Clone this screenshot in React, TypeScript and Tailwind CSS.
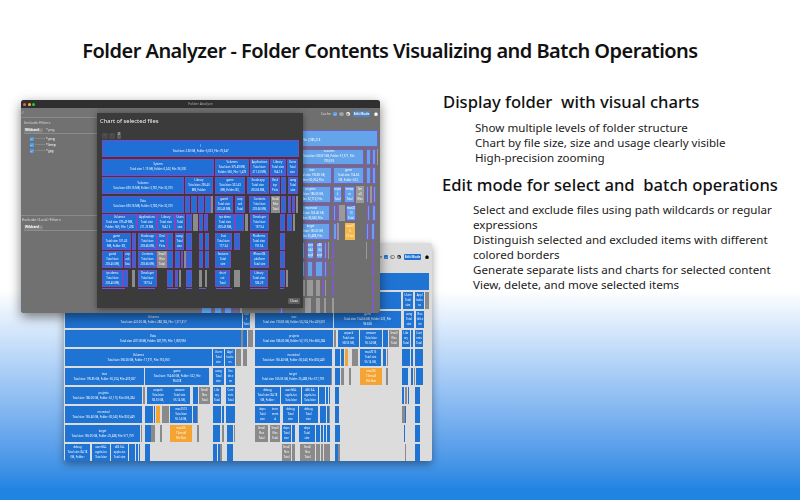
import React from 'react';
import { Home, Settings, RotateCcw, Check, ChevronDown } from 'lucide-react';

type Kind = 'b' | 'g' | 'o';
type CellData = [number, number, Kind, ...string[]];

const themes = {
  light: {
    b: 'bg-[#1f73d3] text-white',
    g: 'bg-[#8a8a8a] text-white',
    o: 'bg-[#f4a432] text-white',
  },
  dim: {
    b: 'bg-[#63a4ea] text-white border border-[#7f5cc4]',
    g: 'bg-[#9a9a9a] text-white',
    o: 'bg-[#f7b84a] text-white',
  },
  modal: {
    b: 'bg-[#1f6fd6] text-white border border-[#7f48c0]',
    g: 'bg-[#8c8c8c] text-white',
    o: 'bg-[#f4a432] text-white',
  },
};

function Row({ cells, origin, theme, height }: { cells: CellData[]; origin: number; theme: keyof typeof themes; height: string }) {
  let cursor = origin;
  return (
    <div className={`flex shrink-0 ${height}`}>
      {cells.map(([x1, x2, kind, ...lines], i) => {
        const style = { marginLeft: x1 - cursor, width: x2 - x1 };
        cursor = x2;
        return (
          <div key={i} style={style} className={`shrink-0 flex flex-col items-center justify-center overflow-hidden text-center text-[2.7px] leading-[5px] ${themes[theme][kind]}`}>
            {lines.map((l, j) => (
              <span key={j} className="whitespace-nowrap">{l}</span>
            ))}
          </div>
        );
      })}
    </div>
  );
}

const backRows: CellData[][] = [
  [[65, 429, 'b']],
  [[65, 401, 'b'], [403, 413, 'b', 'Users', 'Total', 'size'], [415, 424, 'b', 'Appl', 'icatio', 'ns'], [425, 429, 'g']],
  [
    [65, 242, 'b', 'Volumes', 'Total size: 422.00 GB, Folder: 288,184, File: 1,371,817'], [243, 250, 'b', 'Libr', 'r', 'Total'],
    [255, 333, 'b', 'mac', 'Total size: 190.85 GB, Folder: 50,204, File: 439,007'], [334, 401, 'b', 'game', 'Total size: 154.66 GB, Folder: 322, File', '96.638'],
    [404, 414, 'b', 'uang', 'Total', 'size'], [416, 424, 'b', 'Roo', 'tkit.e', 'en'],
  ],
  [
    [65, 241, 'b', 'Data', 'Total size: 419.18 GB, Folder: 287,975, File: 1,369,956'], [241, 243, 'g'], [243, 247, 'b'], [248, 253, 'g'],
    [255, 333, 'b', 'projects', 'Total size: 186.00 GB, Folder: 52,110, File: 606,284'], [334, 336, 'g'], [338, 359, 'b', 'unpack', 'Total size', '58.53 GB,'],
    [360, 382, 'b', 'vmware', 'Total size', '55.14 GB,'], [383, 388, 'b'], [389, 399, 'g', 'Small', 'files', 'Total'], [402, 410, 'b', 'Libr', 'ary', 'Total'], [411, 413, 'b'], [415, 423, 'b', 'Cont', 'ents', 'Total'],
  ],
  [
    [65, 212, 'b', 'Volumes', 'Total size: 350.00 GB, Folder: 17,971, File: 750,053'], [213, 224, 'b', 'Users', 'Total', 'size'], [225, 235, 'b', 'Appl', 'icatio', 'ns'], [236, 241, 'g'], [243, 247, 'g'],
    [255, 332, 'b', 'moreviral', 'Total size: 165.40 GB, Folder: 30,040, File: 830,449'], [335, 340, 'b'], [341, 344, 'b'], [345, 348, 'o'], [352, 358, 'g'],
    [360, 381, 'b', 'mac2013', 'Total size', '55.14 GB,'], [383, 386, 'b'], [387, 388, 'g'], [402, 410, 'b'], [411, 413, 'b'], [415, 423, 'b'],
  ],
  [
    [65, 144, 'b', 'mac', 'Total size: 190.85 GB, Folder: 50,204, File: 439,007'], [145, 209, 'b', 'game', 'Total size: 154.66 GB, Folder: 322, File', '96.638'], [213, 224, 'b', 'uang', 'Total', 'size'], [226, 235, 'b', 'Xco', 'de.e', 'en'],
    [255, 331, 'b', 'target', 'Total size: 165.05 GB, Folder: 25,488, File: 571,759'], [331, 332, 'g'], [335, 340, 'b'], [341, 344, 'g'], [349, 351, 'g'],
    [360, 382, 'o', 'macOS', '13 mod!', 'File Size'], [386, 388, 'g'], [402, 408, 'b'], [411, 413, 'b'], [414, 415, 'g'], [416, 423, 'b'],
  ],
  [
    [65, 142, 'b', 'projects', 'Total size: 186.00 GB, Folder: 52,110, File: 606,284'], [143, 145, 'g'], [147, 169, 'b', 'unpack', 'Total size', '58.53 GB,'], [169, 190, 'b', 'vmware', 'Total size', '55.14 GB,'], [193, 198, 'b'],
    [199, 210, 'g', 'Small', 'files', 'Total'], [213, 221, 'b', 'Libr', 'ary', 'Total'], [226, 235, 'b', 'Cont', 'ents', 'Total'],
    [255, 280, 'b', 'debug', 'Total size: 84.18', 'GB, Folder:'], [281, 301, 'b', 'aarch64-', 'apple-ios', 'Total size'], [302, 318, 'b', 'x86_64-', 'apple-ios', 'Total size'], [319, 325, 'b'], [326, 328, 'b'], [329, 330, 'b'],
    [335, 339, 'b'], [402, 404, 'b'], [405, 407, 'g'], [408, 409, 'b'], [415, 420, 'b'],
  ],
  [
    [65, 142, 'b', 'moreviral', 'Total size: 165.40 GB, Folder: 30,040, File: 830,449'], [145, 153, 'b'], [154, 155, 'b'], [156, 160, 'o'], [162, 169, 'g'], [170, 192, 'b', 'mac2013', 'Total size', '55.14 GB,'], [193, 197, 'b'], [197, 198, 'g'],
    [213, 221, 'b'], [222, 224, 'b'], [226, 235, 'b'],
    [255, 270, 'b', 'deps', 'Total', 'size'], [270, 280, 'b', 'incre', 'ment', 'al'], [283, 298, 'b', 'debug', 'Total', 'size'], [299, 318, 'b', 'debug', 'Total', 'size'], [320, 326, 'b'], [327, 329, 'b'], [329, 330, 'g'],
    [335, 339, 'b'], [402, 405, 'g'], [405, 406, 'b'], [415, 420, 'b'],
  ],
  [
    [65, 140, 'b', 'target', 'Total size: 165.05 GB, Folder: 25,488, File: 571,759'], [141, 142, 'g'], [145, 151, 'b'], [151, 155, 'g'], [160, 162, 'g'], [170, 192, 'o', 'macOS', '13 mod!', 'File Size'], [197, 199, 'g'],
    [213, 220, 'b'], [222, 224, 'g'], [227, 233, 'b'], [234, 235, 'g'],
    [255, 268, 'g', 'Small', 'files', 'Total'], [270, 280, 'g', 'Small', 'files', 'Total'], [282, 291, 'b', 'deps', 'Total', 'size'], [292, 295, 'b'], [299, 315, 'b', 'deps', 'Total', 'size'], [316, 320, 'b'], [321, 323, 'b'], [324, 326, 'b'], [327, 330, 'b'],
    [335, 340, 'b'], [404, 405, 'b'], [415, 420, 'b'],
  ],
  [
    [65, 90, 'b', 'debug', 'Total size: 84.18', 'GB, Folder:'], [92, 110, 'b', 'aarch64-', 'apple-ios', 'Total size'], [111, 128, 'b', 'x86_64-', 'apple-ios', 'Total size'], [129, 135, 'b'], [136, 138, 'b'], [139, 140, 'b'],
    [145, 150, 'b'], [213, 217, 'b'], [218, 220, 'b'], [220, 222, 'g'], [227, 233, 'b'],
    [282, 291, 'g', 'Small', 'files', 'Total'], [292, 295, 'g'], [300, 315, 'g', 'Small', 'files', 'Total'], [316, 320, 'g'], [321, 323, 'g'], [324, 327, 'g'], [327, 330, 'g'],
    [335, 338, 'b'], [338, 340, 'g'], [405, 406, 'g'], [415, 420, 'b'],
  ],
];

// the left part of these rows sits behind the chart sheet
const frontRows: CellData[][] = [
  [[200, 378, 'b', '/', 'Total size: 1.20 TB, Folder: 420,113, File: 2,985,218']],
  [[294, 364, 'b', 'Volumes', 'Total size: 500.81 GB, Folder: 57,571, File:', '790,053'], [366, 371, 'b'], [372, 376, 'b'], [377, 378, 'g']],
  [[292, 332, 'b', 'mac', 'Total size: 190.85 GB,', 'Folder: 50,204, File:'], [333, 364, 'b', 'game', 'Total size: 154.66', 'GB, Folder: 322,'], [366, 371, 'b'], [372, 376, 'b']],
  [[290, 331, 'b', 'projects', 'Total size: 186.00 GB,', 'Folder: 52,110, File:'], [333, 342, 'b', 'unpac', 'k', 'Total'], [344, 355, 'b', 'vmwa', 're', 'Total'], [356, 364, 'g', 'Sm', 'all', 'files'], [366, 369, 'b'], [370, 372, 'g'], [373, 376, 'b']],
  [[292, 330, 'b', 'moreviral', 'Total size: 165.40 GB,', 'Folder: 30,040, File:'], [333, 336, 'b'], [337, 338, 'b'], [338, 344, 'g'], [345, 355, 'b', 'mac20', '13', 'Total'], [366, 369, 'b'], [371, 375, 'b']],
  [[291, 330, 'b', 'target', 'Total size: 165.05 GB,', 'Folder: 25,488, File:'], [333, 337, 'b'], [337, 339, 'g'], [345, 355, 'o', 'macO', 'S', '13 mo'], [366, 369, 'b'], [371, 375, 'b']],
  [[290, 305, 'b'], [307, 314, 'b', 'aarc', 'h64', 'appl'], [316, 323, 'b', 'x86', '_64', 'appl'], [324, 327, 'b'], [328, 329, 'g'], [332, 334, 'b'], [366, 367, 'g'], [372, 373, 'b']],
  [[290, 305, 'b'], [307, 313, 'b'], [315, 323, 'b'], [324, 327, 'b'], [332, 334, 'b'], [372, 374, 'b']],
  [[290, 305, 'g'], [307, 313, 'g'], [316, 320, 'g'], [322, 324, 'b'], [325, 326, 'g'], [332, 334, 'b'], [372, 374, 'b']],
  [
    [201, 212, 'b'], [214, 222, 'b'], [224, 232, 'b'], [235, 237, 'b'], [240, 242, 'g'], [280, 283, 'b'],
    [305, 311, 'g'], [316, 320, 'g'], [324, 326, 'g'], [332, 334, 'g'], [372, 374, 'b'],
  ],
];

const modalRows: CellData[][] = [
  [[102, 299, 'b', '/', 'Total size: 2.30 GB, Folder: 5,023, File: 70,647']],
  [[102, 214, 'b', 'System', 'Total size: 1.19 GB, Folder: 6,243, File: 36,330'], [215, 249, 'b', 'Volumes', 'Total size: 375.49 MB,', 'Folder: 565, File: 1,478'], [250, 269, 'b', 'Applications', 'Total size:', '211.23 MB,'], [270, 286, 'b', 'Library', 'Total size:', '164.15'], [287, 298, 'b', 'Users', 'Total', 'size']],
  [[102, 184, 'b', 'Volumes', 'Total size: 693.16 MB, Folder: 3,781, File: 32,375'], [185, 213, 'b', 'Library', 'Total size: 290.40', 'MB, Folder:'], [215, 245, 'b', 'game', 'Total size: 322.43', 'MB, Folder: 83,'], [247, 269, 'b', 'Xcode.app', 'Total size:', '203.66 MB,'], [270, 280, 'b', 'Desk', 'top', 'Picts'], [281, 286, 'b'], [288, 298, 'b', 'uang', 'Total', 'size']],
  [[102, 184, 'b', 'Data', 'Total size: 693.16 MB, Folder: 3,780, File: 32,375'], [185, 190, 'b'], [191, 197, 'b'], [198, 204, 'b'], [205, 211, 'b'], [211, 213, 'g'], [215, 233, 'b', 'gamd', 'Total size:', '203.45 MB,'], [235, 245, 'b', 'unp', 'ack', 'Total'], [249, 270, 'b', 'Contents', 'Total size:', '203.66 MB,'], [271, 280, 'g', 'Small', 'Files', 'Total'], [281, 286, 'b'], [288, 291, 'b'], [292, 295, 'b'], [296, 298, 'g']],
  [[102, 137, 'b', 'Volumes', 'Total size: 375.49 MB,', 'Folder: 565, File: 1,478'], [137, 157, 'b', 'Applications', 'Total size:', '211.23 MB,'], [157, 175, 'b', 'Library', 'Total size:', '164.15'], [175, 185, 'b', 'Users', 'Total', 'size'], [186, 192, 'b'], [193, 198, 'g'], [199, 203, 'b'], [204, 208, 'b'], [215, 235, 'b', 'tps demo', 'Total size:', '203.45 MB,'], [235, 244, 'b'], [245, 248, 'g'], [250, 269, 'b', 'Developer', 'Total size:', '197.54'], [280, 285, 'b'], [287, 292, 'b'], [293, 295, 'g']],
  [[102, 131, 'b', 'game', 'Total size: 101.43', 'MB, Folder: 83,'], [132, 136, 'b'], [138, 157, 'b', 'Xcode.app', 'Total size:', '203.66 MB,'], [157, 167, 'b', 'Devi', 'ces', 'Picts'], [167, 173, 'b'], [175, 184, 'b', 'uang', 'Total', 'size'], [186, 192, 'b'], [199, 203, 'b'], [205, 209, 'b'], [215, 232, 'b', 'Inst', 'Total size:', '177.34'], [234, 240, 'b'], [250, 268, 'b', 'Platforms', 'Total size:', '197.54'], [280, 285, 'b']],
  [[102, 123, 'b', 'gamd', 'Total size:', '203.45 MB,'], [124, 131, 'b', 'unp', 'ack', 'Total'], [132, 136, 'b'], [138, 157, 'b', 'Contents', 'Total size:', '203.66 MB,'], [157, 167, 'g', 'Small', 'Files', 'Total'], [167, 173, 'b'], [175, 180, 'b'], [181, 183, 'b'], [184, 186, 'g'], [186, 192, 'b'], [199, 203, 'b'], [205, 209, 'b'], [215, 231, 'b', 'features', 'Total', 'size'], [250, 269, 'b', 'iPhoneOS.', 'platform', 'Total size'], [280, 285, 'b']],
  [[102, 123, 'b', 'tps demo', 'Total size:', '203.45 MB,'], [123, 128, 'b'], [132, 135, 'g'], [138, 157, 'b', 'Developer', 'Total size:', '197.54'], [167, 173, 'b'], [175, 178, 'b'], [179, 181, 'g'], [186, 192, 'b'], [199, 202, 'g'], [205, 207, 'g'], [215, 230, 'b', 'short', 'cut', 'Total'], [234, 240, 'g'], [250, 268, 'b', 'Library', 'Total size:', '186.29'], [280, 285, 'b'], [286, 288, 'g']],
];

const thinLine: [number, number][] = [[102, 125], [138, 155], [167, 178], [186, 192], [199, 206], [216, 232], [250, 268], [280, 284]];

function Toolbar({ dim }: { dim?: boolean }) {
  return (
    <div className={`flex items-center justify-end gap-[2px] ${dim ? 'text-[#d8d8d8]' : 'text-[#222222]'}`}>
      <span className="text-[3.6px] leading-none">Cache</span>
      <div className={`w-[4px] h-[4px] rounded-[1px] flex items-center justify-center ${dim ? 'bg-[#5e9de0]' : 'bg-[#1f73d3]'}`}>
        <Check size={3} color="white" strokeWidth={3} />
      </div>
      <div className={`w-[4.5px] h-[4.5px] rounded-full flex items-center justify-center ${dim ? 'bg-[#999999]' : 'bg-white border-[0.5px] border-[#888888]'}`}>
        <RotateCcw size={3} strokeWidth={2} />
      </div>
      <div className={`w-[4.5px] h-[4.5px] rounded-full flex items-center justify-center ${dim ? 'bg-white text-[#555555]' : 'bg-[#222222] text-white'}`}>
        <Settings size={3} strokeWidth={3} />
      </div>
      <div className={`ml-[1px] w-[17px] h-[6px] rounded-[1px] flex items-center justify-center whitespace-nowrap text-[3.2px] font-semibold text-white ${dim ? 'bg-[#4d84bf]' : 'bg-[#1f73d3]'}`}>Edit Mode</div>
      <div className={`ml-[1px] w-[5px] flex justify-center ${dim ? 'text-white' : 'text-black'}`}>
        <Home size={4} fill="currentColor" strokeWidth={2} />
      </div>
    </div>
  );
}

function FilterRow({ value }: { value: string }) {
  return (
    <div className="flex items-center h-[6px] pl-[6px] text-[3.2px] text-[#d0d0d0]">
      <div className="w-[3.5px] h-[3.5px] rounded-[0.5px] bg-[#4e9be8] flex items-center justify-center">
        <Check size={3} color="white" strokeWidth={3} />
      </div>
      <span className="ml-[1.5px] w-[11px] text-[2.5px] text-[#a8a8a8]">Wildcard</span>
      <span className="text-[#e4e4e4] font-semibold">{value}</span>
    </div>
  );
}

function Sidebar() {
  return (
    <div className="w-[76px] shrink-0 flex flex-col bg-[#717171] text-[#dddddd]">
      <div className="h-[10px] pl-[1px] flex items-center text-[4px] bg-[#747474] border-b-[0.5px] border-[#8a8a8a]">/</div>
      <div className="h-[97px] pl-[3px] pt-[2px]">
        <div className="text-[4px] leading-[6px]">Include Filters</div>
        <div className="mt-[2px] mb-[2px] flex items-center gap-[3px] h-[6px] border-b-[0.5px] border-[#8c8c8c] text-[3.2px]">
          <div className="w-[19px] h-[5px] rounded-[1px] bg-[#808080] flex items-center pl-[1px] font-bold text-white">
            Wildcard <ChevronDown size={3} />
          </div>
          <span className="text-[#e4e4e4]">*.png</span>
        </div>
        <FilterRow value="*.png" />
        <FilterRow value="*.bmp" />
        <FilterRow value="*.jpg" />
      </div>
      <div className="pl-[1px] pt-[1px] border-t-[0.5px] border-[#8a8a8a]">
        <div className="text-[4px] leading-[6px]">Exclude (Lock) Filters</div>
        <div className="ml-[2px] mt-[2px] flex items-center gap-[3px] h-[6px] text-[3.2px] border-b-[0.5px] border-[#8c8c8c]">
          <div className="w-[19px] h-[5px] rounded-[1px] bg-[#808080] flex items-center pl-[1px] font-bold text-white">
            Wildcard <ChevronDown size={3} />
          </div>
        </div>
      </div>
    </div>
  );
}

function ChartSheet() {
  return (
    <div className="absolute left-[76px] top-[13px] w-[206px] h-[195px] bg-[#3b3b3b] px-[5px] flex flex-col shadow-[0_1px_6px_rgba(0,0,0,0.4)]">
      <div className="mt-[3px] -ml-[2px] text-[5.8px] leading-[10px] text-[#f2f2f2]">Chart of selected files</div>
      <div className="mt-[6px] flex items-center gap-[1px] h-[7px] text-[3.2px]">
        <div className="w-[6px] h-[6px] rounded-[1px] bg-[#4a4a4a] text-[#777777] text-center">&lt;</div>
        <div className="w-[6px] h-[6px] rounded-[1px] bg-[#4a4a4a] text-[#777777] text-center">&gt;</div>
        <div className="ml-[1px] w-[4px] h-[7px] rounded-[1px] bg-[#5c5c5c] text-white text-center">2</div>
      </div>
      <div className="mt-[1px] flex flex-col gap-[1.5px]">
        {modalRows.map((cells, i) => (
          <Row key={i} cells={cells} origin={102} theme="modal" height="h-[17px]" />
        ))}
        <div className="flex h-[1px]">
          {thinLine.map(([a, b], i) => (
            <div key={i} className="bg-[#7a55c8]" style={{ marginLeft: a - (i ? thinLine[i - 1][1] : 102), width: b - a }} />
          ))}
        </div>
      </div>
      <div className="mt-auto mb-[4px] self-end mr-[-2px] w-[12px] h-[6px] rounded-[1px] bg-[#5e5e5e] text-[3.2px] leading-[6px] text-center text-white">Close</div>
    </div>
  );
}

export default function App() {
  return (
    <div className="relative w-[800px] h-[500px] overflow-hidden bg-gradient-to-b from-white from-[58%] to-[#1f84e2] to-[98%] font-['Noto_Sans',sans-serif] text-[#111111]">
      <h1 className="pt-[36px] pr-[20px] text-center text-[20px] leading-[29px] font-semibold tracking-[-0.53px]">
        Folder Analyzer - Folder Contents Visualizing and Batch Operations
      </h1>

      <div className="ml-[443px] mt-[26px]">
        <h2 className="text-[16.6px] leading-[22px] font-medium whitespace-pre">Display folder  with visual charts</h2>
        <ul className="mt-[7px] ml-[32px] text-[11.6px] leading-[15px] text-[#222222]">
          <li>Show multiple levels of folder structure</li>
          <li>Chart by file size, size and usage clearly visible</li>
          <li>High-precision zooming</li>
        </ul>
        <h2 className="mt-[9px] -ml-[1px] text-[16.6px] leading-[22px] font-medium whitespace-pre">Edit mode for select and  batch operations</h2>
        <ul className="mt-[6px] ml-[30px] w-[310px] text-[11.6px] leading-[15px] text-[#222222]">
          <li>Select and exclude files using path wildcards or regular expressions</li>
          <li>Distinguish selected and excluded items with different colored borders</li>
          <li>Generate separate lists and charts for selected content</li>
          <li>View, delete, and move selected items</li>
        </ul>
      </div>

      {/* back window */}
      <div className="absolute left-[64px] top-[243px] w-[368px] h-[218px] overflow-hidden rounded-[2px] bg-[#dcdcdc] shadow-[0_3px_8px_rgba(0,0,0,0.4)] blur-[0.4px]">
        <div className="h-[30px] pt-[11px] pr-[3px]">
          <Toolbar />
        </div>
        <div className="flex flex-col gap-[2px] pl-[1px]">
          {backRows.map((cells, i) => (
            <Row key={i} cells={cells} origin={65} theme="light" height="h-[17px]" />
          ))}
        </div>
      </div>

      {/* front window */}
      <div className="absolute left-[21px] top-[100px] w-[359px] h-[213px] overflow-hidden rounded-[3px] flex flex-col bg-[#6f6f6f] shadow-[0_4px_12px_rgba(0,0,0,0.5)] blur-[0.4px]">
        <div className="relative h-[8px] shrink-0 bg-[#2f2f2f] flex items-center pl-[2px] gap-[1.5px]">
          <div className="w-[3px] h-[3px] rounded-full bg-[#ee5f57]" />
          <div className="w-[3px] h-[3px] rounded-full bg-[#f5bd2f]" />
          <div className="w-[3px] h-[3px] rounded-full bg-[#29c83f]" />
          <span className="absolute left-0 right-0 text-center text-[3.6px] text-[#a8a8a8]">Folder Analyze</span>
        </div>
        <div className="flex flex-1 min-h-0">
          <Sidebar />
          <div className="flex-1 min-w-0 overflow-hidden">
            <div className="h-[22px] pt-[3px] pr-[2px]">
              <Toolbar dim />
            </div>
            <div className="flex flex-col gap-[2.2px]">
              {frontRows.map((cells, i) => (
                <Row key={i} cells={cells} origin={97} theme="dim" height="h-[16.5px]" />
              ))}
            </div>
          </div>
        </div>
        <ChartSheet />
      </div>
    </div>
  );
}
